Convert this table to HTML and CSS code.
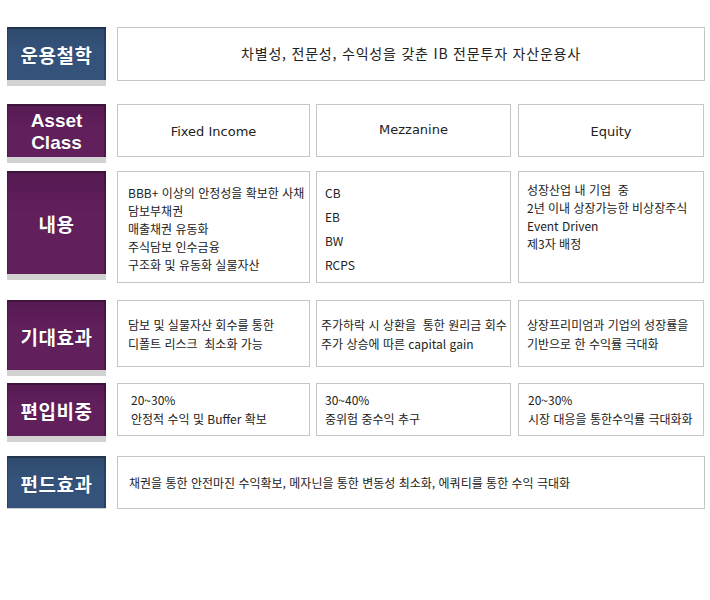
FILE: index.html
```html
<!DOCTYPE html>
<html lang="ko">
<head>
<meta charset="utf-8">
<link rel="stylesheet" href="styles.css">
</head>
<body>
<div class="page">
  <div class="row r1">
    <div class="label blue h53">운용철학</div>
    <div class="box single center big">차별성, 전문성, 수익성을 갖춘 IB 전문투자 자산운용사</div>
  </div>

  <div class="row r2">
    <div class="label purple h53 two"><span>Asset</span><span>Class</span></div>
    <div class="cols">
      <div class="box center h53 t2">Fixed Income</div>
      <div class="box center h53 t2 mz">Mezzanine</div>
      <div class="box center h53 t2">Equity</div>
    </div>
  </div>

  <div class="row r3">
    <div class="label purple h103">내용</div>
    <div class="cols">
      <div class="box h112 list l18 p1">
        <div>BBB+ 이상의 안정성을 확보한 사채</div>
        <div>담보부채권</div>
        <div>매출채권 유동화</div>
        <div>주식담보 인수금융</div>
        <div>구조화 및 유동화 실물자산</div>
      </div>
      <div class="box h112 list l24 p2">
        <div>CB</div>
        <div>EB</div>
        <div>BW</div>
        <div>RCPS</div>
      </div>
      <div class="box h112 list l18 p3">
        <div>성장산업 내 기업&nbsp; 중</div>
        <div>2년 이내 상장가능한 비상장주식</div>
        <div>Event Driven</div>
        <div>제3자 배정</div>
      </div>
    </div>
  </div>

  <div class="row r4">
    <div class="label purple h70">기대효과</div>
    <div class="cols">
      <div class="box h67 list l19 p4">
        <div>담보 및 실물자산 회수를 통한</div>
        <div>디폴트 리스크&nbsp; 최소화 가능</div>
      </div>
      <div class="box h67 list l19 p4b">
        <div>주가하락 시 상환을&nbsp; 통한 원리금 회수</div>
        <div>주가 상승에 따른 capital gain</div>
      </div>
      <div class="box h67 list l19 p4c">
        <div>상장프리미엄과 기업의 성장률을</div>
        <div>기반으로 한 수익률 극대화</div>
      </div>
    </div>
  </div>

  <div class="row r5">
    <div class="label purple h53">편입비중</div>
    <div class="cols">
      <div class="box h53 list l19 p5">
        <div>20~30%</div>
        <div>안정적 수익 및 Buffer 확보</div>
      </div>
      <div class="box h53 list l19 p5b">
        <div>30~40%</div>
        <div>중위험 중수익 추구</div>
      </div>
      <div class="box h53 list l19 p5c">
        <div>20~30%</div>
        <div>시장 대응을 통한수익률 극대화화</div>
      </div>
    </div>
  </div>

  <div class="row r6">
    <div class="label blue h52">펀드효과</div>
    <div class="box single left6">채권을 통한 안전마진 수익확보, 메자닌을 통한 변동성 최소화, 에쿼티를 통한 수익 극대화</div>
  </div>
</div>
</body>
</html>
```

FILE: styles.css
```css
html, body {
  margin: 0;
  padding: 0;
  background: #ffffff;
}

.page {
  padding: 27px 0 0 7px;
  width: 698px;
  font-family: "Noto Sans CJK KR", "DejaVu Sans", sans-serif;
  font-size: 12px;
  color: #222222;
}

.row {
  display: grid;
  grid-template-columns: 99px 588px;
  column-gap: 11px;
  align-items: start;
}

.r2 { margin-top: 23px; }
.r3 { margin-top: 14px; }
.r4 { margin-top: 17px; }
.r5 { margin-top: 13px; }
.r6 { margin-top: 20px; }

.label {
  display: flex;
  align-items: center;
  justify-content: center;
  text-align: center;
  color: #ffffff;
  font-weight: bold;
  font-size: 19px;
  letter-spacing: 0.5px;
  box-sizing: border-box;
  border-top: 2px solid rgba(0, 0, 0, 0.35);
  box-shadow: inset 1px 0 0 rgba(0,0,0,0.15), inset -2px 0 0 rgba(0,0,0,0.2), 0 6px 0 #d2d2d2;
  text-shadow: 0 0 1px rgba(0,0,0,0.4);
}

.label.two {
  flex-direction: column;
  font-family: "Liberation Sans", Arial, sans-serif;
  font-weight: bold;
  font-size: 19px;
  line-height: 22px;
  letter-spacing: 0;
}

.blue { background: linear-gradient(#2f4a6e, #34527a 40%, #34527a); }
.purple { background: linear-gradient(#561a52, #611f5c 40%, #611f5c); }

.h53 { height: 53px; }
.h52 { height: 52px; }
.h70 { height: 70px; }
.h103 { height: 103px; }

.box {
  box-sizing: border-box;
  border: 1px solid #c6c6c6;
  background: #ffffff;
}

.single {
  height: 54px;
  display: flex;
  align-items: center;
  font-size: 13px;
}

.center {
  justify-content: center;
  display: flex;
  align-items: center;
  text-align: center;
}

.big { font-size: 14px; letter-spacing: 0.8px; padding-bottom: 2px; }
.left6 { padding-left: 11px; font-size: 12px; height: 53px; }

.cols {
  display: grid;
  grid-template-columns: 193px 195px 187px;
  column-gap: 6px;
}
.cols > .box:nth-child(3) { margin-left: 1px; }

.t2 {
  font-family: "DejaVu Sans", "Noto Sans", sans-serif;
  font-size: 13px;
  padding-top: 2px;
}
.t2.mz { padding-top: 0; padding-bottom: 2px; }

.h112 { height: 112px; }
.h67 { height: 67px; }

.list { font-size: 12px; }
.l18 { line-height: 18px; }
.l24 { line-height: 24px; }
.l19 { line-height: 19px; }

.p1 { padding: 12px 0 0 10px; }
.p2 { padding: 9px 0 0 8px; }
.p3 { padding: 9px 0 0 8px; }

.p4 { padding: 14px 0 0 10px; }
.p4b { padding: 14px 0 0 4px; }
.p4c { padding: 14px 0 0 8px; }

.p5 { padding: 6px 0 0 13px; }
.p5b { padding: 6px 0 0 8px; }
.p5c { padding: 6px 0 0 9px; }
```
